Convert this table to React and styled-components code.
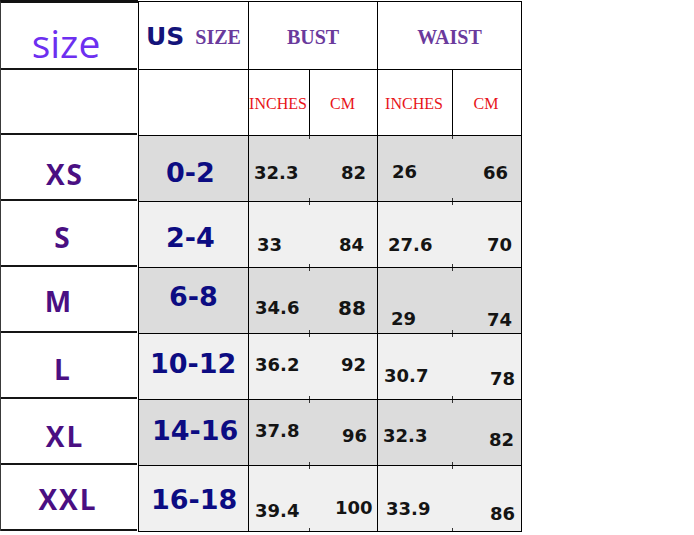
import React from 'react';
import styled, { createGlobalStyle } from 'styled-components';

const rows = [
  {
    size: 'XS', shift: 4, sizeTop: 25, us: '0-2', usLeft: 27, usTop: 23, dark: true,
    values: [
      { t: '32.3', x: 5, y: 28 },
      { t: '82', x: 31, y: 28 },
      { t: '26', x: 14, y: 27 },
      { t: '66', x: 30, y: 28 },
    ],
  },
  {
    size: 'S', shift: 6, sizeTop: 22, us: '2-4', usLeft: 27, usTop: 22, dark: false,
    values: [
      { t: '33', x: 8, y: 34 },
      { t: '84', x: 29, y: 34 },
      { t: '27.6', x: 10, y: 34 },
      { t: '70', x: 34, y: 34 },
    ],
  },
  {
    size: 'M', shift: 10, sizeTop: 20, us: '6-8', usLeft: 30, usTop: 15, dark: true,
    values: [
      { t: '34.6', x: 6, y: 31 },
      { t: '88', x: 28, y: 30, big: true },
      { t: '29', x: 13, y: 42 },
      { t: '74', x: 34, y: 43 },
    ],
  },
  {
    size: 'L', shift: 6, sizeTop: 22, us: '10-12', usLeft: 11, usTop: 16, dark: false,
    values: [
      { t: '36.2', x: 6, y: 22 },
      { t: '92', x: 31, y: 22 },
      { t: '30.7', x: 6, y: 33 },
      { t: '78', x: 37, y: 36 },
    ],
  },
  {
    size: 'XL', shift: 4, sizeTop: 23, us: '14-16', usLeft: 13, usTop: 17, dark: true,
    values: [
      { t: '37.8', x: 6, y: 22 },
      { t: '96', x: 32, y: 27 },
      { t: '32.3', x: 5, y: 27 },
      { t: '82', x: 36, y: 31 },
    ],
  },
  {
    size: 'XXL', shift: 1, sizeTop: 20, us: '16-18', usLeft: 12, usTop: 20, dark: false,
    values: [
      { t: '39.4', x: 6, y: 36 },
      { t: '100', x: 25, y: 33 },
      { t: '33.9', x: 8, y: 34 },
      { t: '86', x: 37, y: 39 },
    ],
  },
];

export default function App() {
  return (
    <>
      <GlobalStyle />
      <Chart>
        <LeftCol>
          <LeftCell $h={67} $top={20} $shift={3}>
            <SizeTitle>size</SizeTitle>
          </LeftCell>
          <LeftCell $h={65} />
          {rows.map((r) => (
            <LeftCell key={r.size} $h={66} $shift={r.shift} $top={r.sizeTop}>
              <SizeLabel>{r.size}</SizeLabel>
            </LeftCell>
          ))}
        </LeftCol>

        <Grid>
          <HeadCell>
            <UsText>US</UsText>
            <SerifHead>SIZE</SerifHead>
          </HeadCell>
          <HeadCell $span={2}>
            <SerifHead>BUST</SerifHead>
          </HeadCell>
          <HeadCell $span={2}>
            <SerifHead>WAIST</SerifHead>
          </HeadCell>

          <HeadCell />
          <HeadCell><Unit>INCHES</Unit></HeadCell>
          <HeadCell><Unit>CM</Unit></HeadCell>
          <HeadCell><Unit>INCHES</Unit></HeadCell>
          <HeadCell><Unit>CM</Unit></HeadCell>

          {rows.map((r) => (
            <React.Fragment key={r.us}>
              <DataCell $dark={r.dark} $x={r.usLeft} $y={r.usTop}>
                <UsNumber>{r.us}</UsNumber>
              </DataCell>
              {r.values.map((v, i) => (
                <DataCell key={i} $dark={r.dark} $x={v.x} $y={v.y} $open={i % 2 === 0}>
                  <Value $big={v.big}>{v.t}</Value>
                </DataCell>
              ))}
            </React.Fragment>
          ))}
        </Grid>
      </Chart>
    </>
  );
}

const GlobalStyle = createGlobalStyle`
  html, body {
    margin: 0;
    padding: 0;
    background: #fff;
  }
`;

const Chart = styled.div`
  display: flex;
  align-items: flex-start;
`;

const LeftCol = styled.div`
  width: 137px;
  border-left: 1px solid #3a3a3a;
  border-top: 3px solid #111;
  display: flex;
  flex-direction: column;
`;

const LeftCell = styled.div`
  box-sizing: border-box;
  width: 136px;
  height: ${(p) => p.$h}px;
  border-bottom: 2px solid #151515;
  display: flex;
  justify-content: center;
  align-items: flex-start;
  padding-top: ${(p) => p.$top || 0}px;
  padding-right: ${(p) => (p.$shift || 0) * 2}px;
  background: #fff;
`;

const SizeTitle = styled.span`
  font-family: 'Open Sans', sans-serif;
  font-size: 39px;
  line-height: 1;
  color: #6d2ff0;
`;

const SizeLabel = styled.span`
  font-family: 'Open Sans', sans-serif;
  font-weight: 700;
  font-size: 28px;
  line-height: 1;
  letter-spacing: 2px;
  color: #4a0f82;
`;

const Grid = styled.div`
  margin-top: 1px;
  display: grid;
  grid-template-columns: 110px 61px 68px 75px 69px;
  grid-template-rows: 68px 66px repeat(6, 66px);
  border-top: 1px solid #000;
  border-left: 1px solid #000;
`;

const HeadCell = styled.div`
  grid-column: span ${(p) => p.$span || 1};
  box-sizing: border-box;
  border-right: 1px solid #000;
  border-bottom: 1px solid #000;
  background: #fff;
  display: flex;
  justify-content: center;
  align-items: center;
  gap: 11px;
  padding-top: 2px;
  white-space: nowrap;
`;

const UsText = styled.span`
  font-family: 'DejaVu Sans', sans-serif;
  font-weight: 700;
  font-size: 25px;
  line-height: 1;
  color: #14147a;
`;

const SerifHead = styled.span`
  font-family: 'Liberation Serif', serif;
  font-weight: 700;
  font-size: 20px;
  line-height: 1;
  color: #6a3a9c;
`;

const Unit = styled.span`
  font-family: 'Liberation Serif', serif;
  font-size: 16px;
  line-height: 1;
  color: #e8141a;
  margin-left: -2px;
`;

const DataCell = styled.div`
  position: relative;
  box-sizing: border-box;
  border-right: ${(p) => (p.$open ? 'none' : '1px solid #000')};
  border-bottom: 1px solid #000;
  background: ${(p) => (p.$dark ? '#dcdcdc' : '#f0f0f0')};
  padding: ${(p) => p.$y}px 0 0 ${(p) => p.$x}px;
  white-space: nowrap;

  &::before,
  &::after {
    content: '';
    display: ${(p) => (p.$open ? 'block' : 'none')};
    position: absolute;
    right: 0;
    width: 1px;
    height: 3px;
    background: #333;
  }
  &::before {
    top: 0;
  }
  &::after {
    bottom: 0;
  }
`;

const UsNumber = styled.span`
  font-family: 'DejaVu Sans', sans-serif;
  font-weight: 700;
  font-size: 27px;
  line-height: 1;
  color: #0c0c82;
`;

const Value = styled.span`
  font-family: 'DejaVu Sans', sans-serif;
  font-weight: 700;
  font-size: ${(p) => (p.$big ? 20 : 18)}px;
  line-height: 1;
  color: #141414;
`;
